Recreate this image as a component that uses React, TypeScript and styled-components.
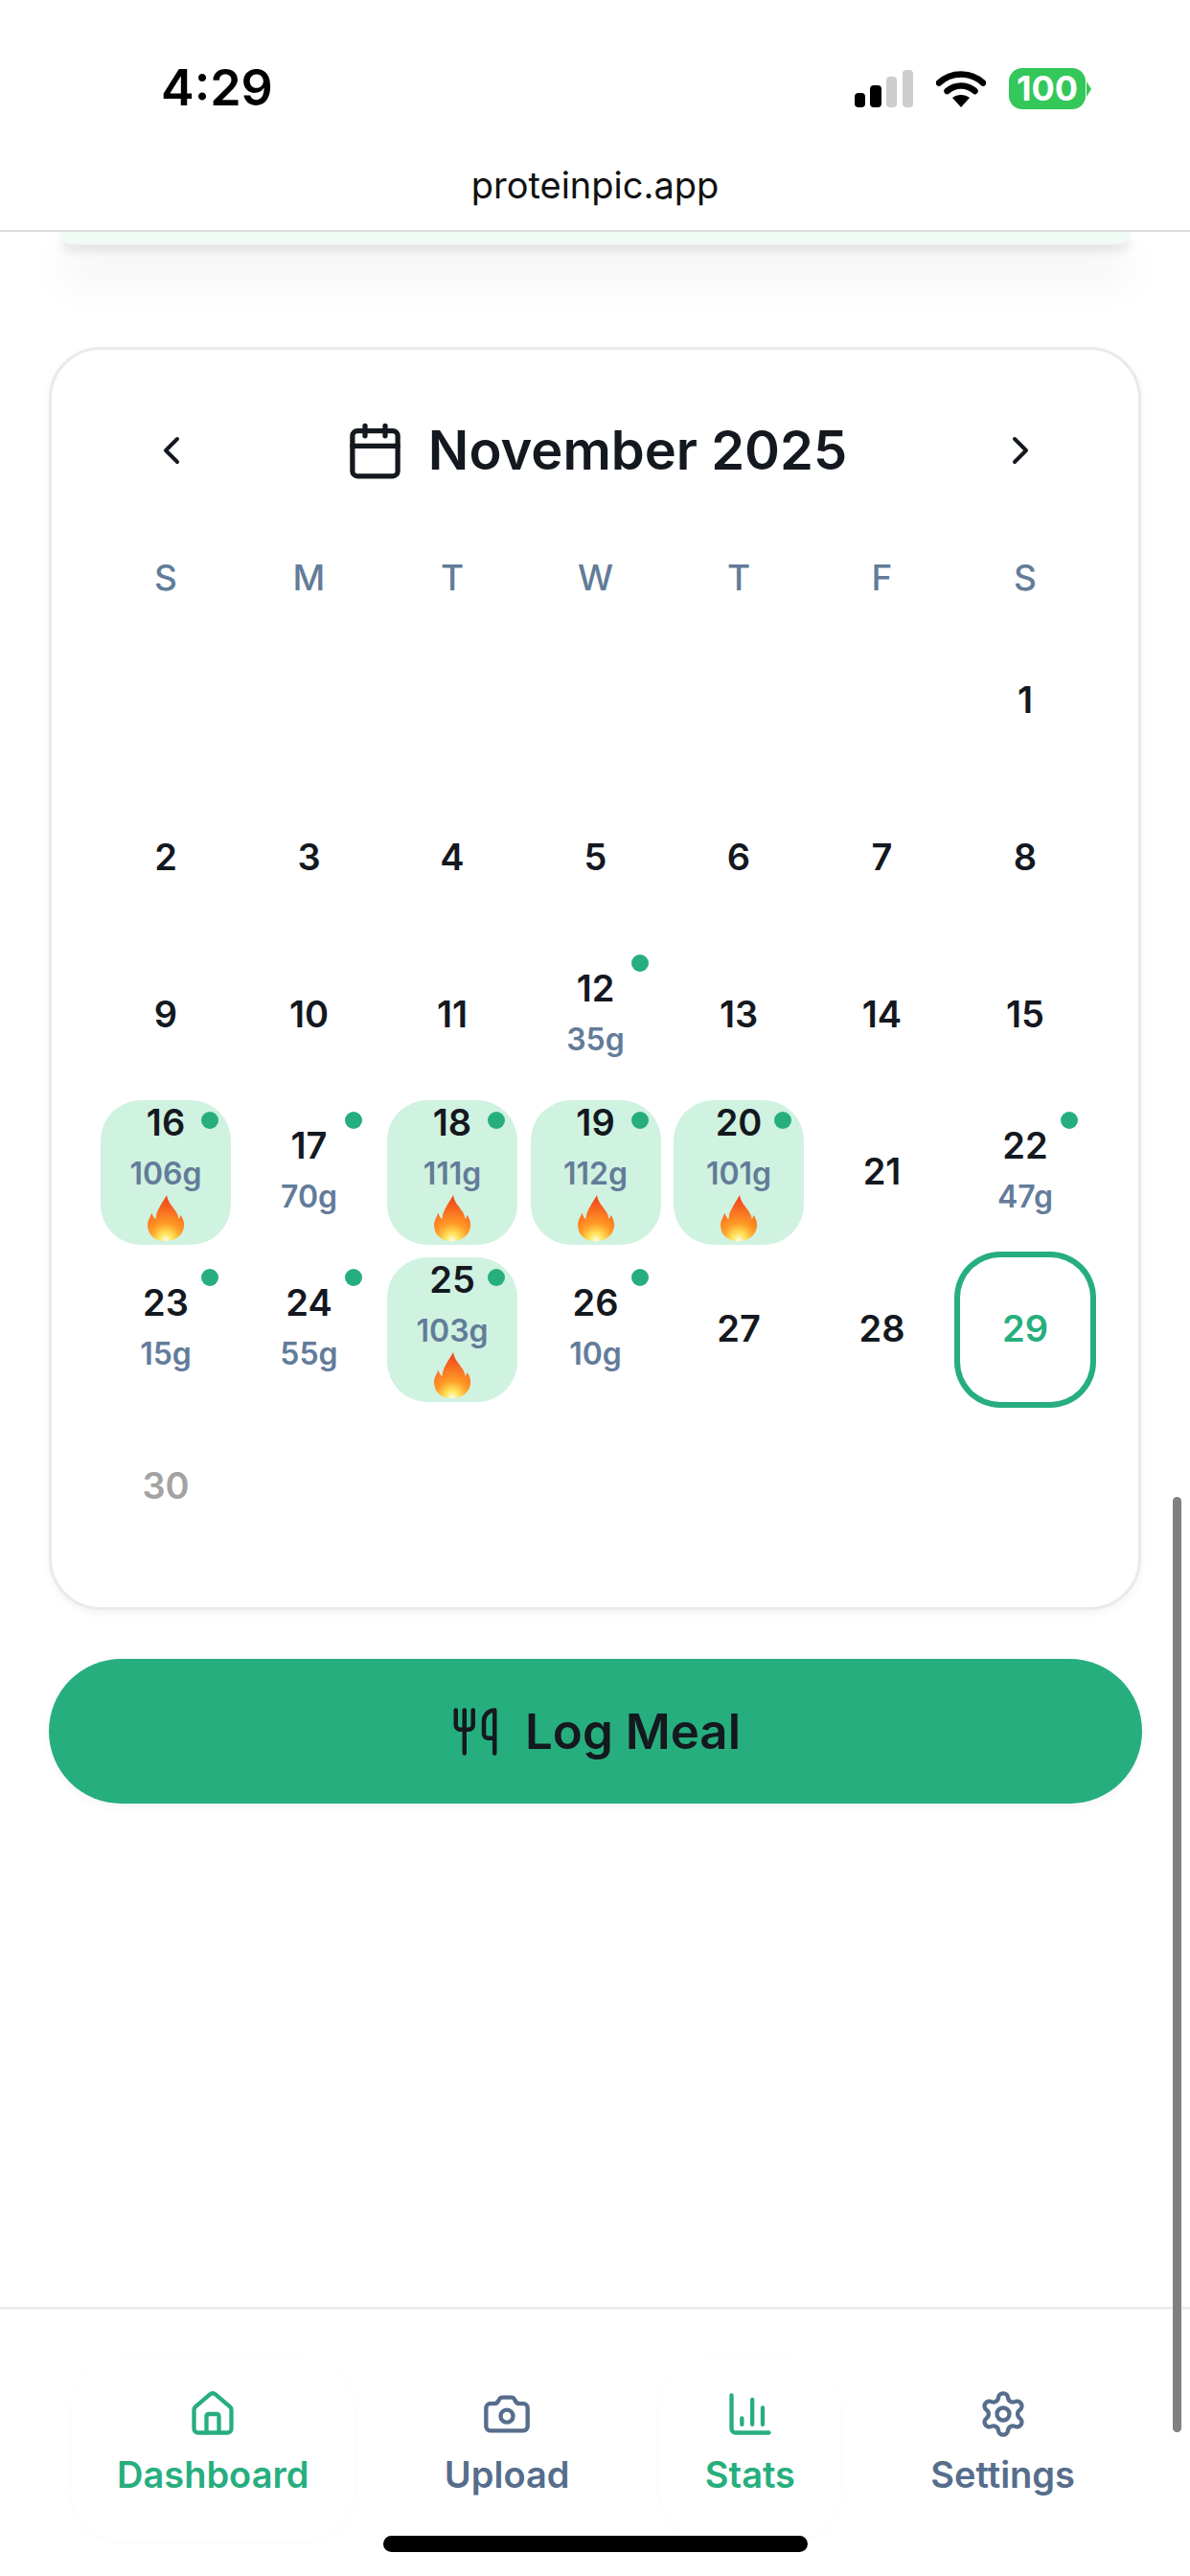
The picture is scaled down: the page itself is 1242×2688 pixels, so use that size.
import React from 'react'
import styled, { createGlobalStyle } from 'styled-components'
import { Calendar, Camera, ChartColumn, ChevronLeft, ChevronRight, House, Settings, Utensils } from 'lucide-react'

const GREEN = '#27ae7e'
const SLATE = '#627c99'
const INK = '#14181f'

const GlobalStyle = createGlobalStyle`
  html, body {
    margin: 0;
    padding: 0;
    background: #fff;
  }
  * {
    box-sizing: border-box;
  }
`

const Page = styled.div`
  position: relative;
  width: 1242px;
  height: 2688px;
  overflow: hidden;
  display: flex;
  flex-direction: column;
  background: #fff;
  font-family: Inter, 'Noto Sans', sans-serif;
  color: ${INK};
`

const TopBar = styled.header`
  position: relative;
  z-index: 2;
  height: 242px;
  flex-shrink: 0;
  background: #fff;
  border-bottom: 2px solid #dcdcdc;
`

const StatusRow = styled.div`
  display: flex;
  justify-content: space-between;
  align-items: center;
  height: 44px;
  margin-top: 70px;
  padding: 0 109px 0 168px;
`

const Time = styled.div`
  font-size: 52px;
  font-weight: 600;
  line-height: 44px;
  color: #000;
`

const StatusIcons = styled.div`
  display: flex;
  align-items: center;
  gap: 24px;
`

const Battery = styled.div`
  position: relative;
  width: 80px;
  height: 43px;
  border-radius: 14px;
  background: #34c759;
  color: #fff;
  font-size: 36px;
  font-weight: 700;
  line-height: 43px;
  text-align: center;
  &::after {
    content: '';
    position: absolute;
    left: 81px;
    top: 14px;
    border-left: 5px solid #34c759;
    border-top: 8px solid transparent;
    border-bottom: 8px solid transparent;
  }
`

const Url = styled.div`
  margin-top: 54px;
  font-size: 38px;
  line-height: 50px;
  text-align: center;
  color: #111;
`

const PrevCardEdge = styled.div`
  width: 1117px;
  height: 13px;
  margin: 0 auto;
  flex-shrink: 0;
  border-radius: 0 0 36px 36px;
  background: #f1fbf5;
  box-shadow: 0 8px 10px rgba(0, 0, 0, 0.09), 0 30px 44px 0 rgba(0, 0, 0, 0.12);
`

const CalendarCard = styled.section`
  width: 1140px;
  height: 1318px;
  margin: 107px auto 0;
  padding: 75px 48px 0 51px;
  flex-shrink: 0;
  border: 3px solid #e8eaed;
  border-radius: 54px;
  background: #fff;
  box-shadow: 0 3px 8px rgba(0, 0, 0, 0.05);
`

const CalendarHeader = styled.div`
  display: flex;
  justify-content: space-between;
  align-items: center;
  height: 60px;
  padding: 0 51px 0 50px;
  margin-bottom: 76px;
`

const NavButton = styled.button`
  display: flex;
  padding: 0;
  border: 0;
  background: none;
  color: ${INK};
`

const MonthTitle = styled.h2`
  display: flex;
  align-items: center;
  gap: 24px;
  margin: 0;
  font-size: 56px;
  font-weight: 600;
  line-height: 60px;
`

const Weekdays = styled.div`
  display: grid;
  grid-template-columns: repeat(7, 136px);
  column-gap: 13.5px;
  margin-bottom: 26px;
`

const Weekday = styled.div`
  font-size: 37px;
  font-weight: 500;
  line-height: 54px;
  text-align: center;
  color: ${SLATE};
`

const DayGrid = styled.div`
  display: grid;
  grid-template-columns: repeat(7, 136px);
  grid-auto-rows: 151px;
  gap: 13px 13.5px;
`

const DayCell = styled.div<{ $hit?: boolean; $today?: boolean; $logged?: boolean }>`
  position: relative;
  display: flex;
  flex-direction: column;
  align-items: center;
  justify-content: center;
  padding-bottom: ${(p) => (p.$logged ? '9px' : '4px')};
  border-radius: 42px;
  background: ${(p) => (p.$hit ? '#d0f2e0' : 'transparent')};
  box-shadow: ${(p) => (p.$today ? `0 0 0 6px ${GREEN}` : 'none')};
`

const DayNumber = styled.div<{ $today?: boolean; $muted?: boolean }>`
  font-size: 38px;
  font-weight: 600;
  line-height: 54px;
  color: ${(p) => (p.$today ? GREEN : p.$muted ? '#a3a3a3' : INK)};
`

const Grams = styled.div`
  margin-top: 4px;
  font-size: 32px;
  font-weight: 600;
  line-height: 45px;
  color: ${SLATE};
`

const LogDot = styled.span`
  position: absolute;
  top: 12px;
  right: 13px;
  width: 18px;
  height: 18px;
  border-radius: 50%;
  background: ${GREEN};
`

const FlameSlot = styled.div`
  display: flex;
  align-items: flex-end;
  justify-content: center;
  height: 50px;
`

const LogButton = styled.button`
  display: flex;
  align-items: center;
  justify-content: center;
  gap: 25px;
  width: 1141px;
  height: 151px;
  margin: 51px auto 0;
  flex-shrink: 0;
  border: 0;
  border-radius: 76px;
  background: ${GREEN};
  color: ${INK};
  font-family: inherit;
  font-size: 51px;
  font-weight: 600;
  box-shadow: 0 4px 10px rgba(0, 0, 0, 0.04);
`

const TabBar = styled.nav`
  display: flex;
  justify-content: space-between;
  align-items: flex-start;
  height: 281px;
  margin-top: auto;
  padding: 50px 72px 0 74px;
  border-top: 3px solid #ececec;
`

const Tab = styled.div<{ $active?: boolean }>`
  display: flex;
  flex-direction: column;
  align-items: center;
  gap: 10px;
  height: 192px;
  padding: 33px 48px 0;
  border-radius: 54px;
  color: ${(p) => (p.$active ? GREEN : '#566d8c')};
  box-shadow: ${(p) => (p.$active ? '0 2px 6px rgba(0, 0, 0, 0.018), 0 0 0 1px rgba(0, 0, 0, 0.008)' : 'none')};
`

const TabLabel = styled.span`
  font-size: 38px;
  font-weight: 600;
  line-height: 54px;
  white-space: nowrap;
`

const HomeIndicator = styled.div`
  position: absolute;
  left: 400px;
  top: 2646px;
  width: 443px;
  height: 17px;
  border-radius: 9px;
  background: #000;
`

const ScrollThumb = styled.div`
  position: absolute;
  left: 1224px;
  top: 1562px;
  width: 9px;
  height: 976px;
  border-radius: 5px;
  background: #808080;
`

type Day = { day: number; grams?: number; hit?: boolean; today?: boolean; muted?: boolean }

const logged: Record<number, number> = {
  12: 35, 16: 106, 17: 70, 18: 111, 19: 112, 20: 101, 22: 47, 23: 15, 24: 55, 25: 103, 26: 10,
}

const days: Day[] = Array.from({ length: 30 }, (_, i) => {
  const day = i + 1
  const grams = logged[day]
  return { day, grams, hit: grams >= 100, today: day === 29, muted: day === 30 }
})

const weekdays = ['S', 'M', 'T', 'W', 'T', 'F', 'S']

const tabs = [
  { label: 'Dashboard', icon: House, active: true },
  { label: 'Upload', icon: Camera },
  { label: 'Stats', icon: ChartColumn, active: true },
  { label: 'Settings', icon: Settings },
]

const SignalIcon = () => (
  <svg width="61" height="39" viewBox="0 0 61 39">
    <rect x="0" y="24" width="11" height="15" rx="4" fill="#000" />
    <rect x="16" y="16" width="12" height="23" rx="4" fill="#000" />
    <rect x="33" y="7" width="11" height="32" rx="4" fill="#cdcdcd" />
    <rect x="50" y="0" width="11" height="39" rx="4" fill="#cdcdcd" />
  </svg>
)

const WifiIcon = () => (
  <svg width="52" height="39" viewBox="0 0 52 39">
    <path d="M3 13.5C16 1.5 36 1.5 49 13.5" fill="none" stroke="#000" strokeWidth="6.5" strokeLinecap="round" />
    <path d="M11.5 22C20 14.5 32 14.5 40.5 22" fill="none" stroke="#000" strokeWidth="6.5" strokeLinecap="round" />
    <path d="M17 29C22 25 30 25 35 29L26 39Z" fill="#000" />
  </svg>
)

const Flame = () => (
  <svg width="40" height="48" viewBox="0 0 38 46">
    <defs>
      <radialGradient id="flame-fill" gradientUnits="userSpaceOnUse" cx="19" cy="45" r="42">
        <stop offset="0" stopColor="#fffde0" />
        <stop offset="0.16" stopColor="#ffe35a" />
        <stop offset="0.4" stopColor="#ff9a26" />
        <stop offset="1" stopColor="#f2441c" />
      </radialGradient>
    </defs>
    <path
      d="M20 0C21 8 27 12 30 18C31 20 32 22 32 24C33 23 34 21 34 20C37 25 38 29 37 33C35 41 28 46 19 46C9 46 2 41 1 32C0 27 3 23 5 18C6 21 7 23 9 24C9 16 15 9 20 0Z"
      fill="url(#flame-fill)"
    />
  </svg>
)

const App = () => (
  <Page>
    <GlobalStyle />
    <TopBar>
      <StatusRow>
        <Time>4:29</Time>
        <StatusIcons>
          <SignalIcon />
          <WifiIcon />
          <Battery>100</Battery>
        </StatusIcons>
      </StatusRow>
      <Url>proteinpic.app</Url>
    </TopBar>
    <PrevCardEdge />
    <CalendarCard>
      <CalendarHeader>
        <NavButton>
          <ChevronLeft size={48} />
        </NavButton>
        <MonthTitle>
          <Calendar size={63} />
          November 2025
        </MonthTitle>
        <NavButton>
          <ChevronRight size={48} />
        </NavButton>
      </CalendarHeader>
      <Weekdays>
        {weekdays.map((w, i) => (
          <Weekday key={i}>{w}</Weekday>
        ))}
      </Weekdays>
      <DayGrid>
        {Array.from({ length: 6 }, (_, i) => (
          <div key={i} />
        ))}
        {days.map((d) => (
          <DayCell key={d.day} $hit={d.hit} $today={d.today} $logged={!!d.grams}>
            {d.grams && <LogDot />}
            <DayNumber $today={d.today} $muted={d.muted}>
              {d.day}
            </DayNumber>
            {d.grams && <Grams>{d.grams}g</Grams>}
            {d.hit && (
              <FlameSlot>
                <Flame />
              </FlameSlot>
            )}
          </DayCell>
        ))}
      </DayGrid>
    </CalendarCard>
    <LogButton>
      <Utensils size={54} strokeWidth={2} />
      Log Meal
    </LogButton>
    <TabBar>
      {tabs.map((t) => (
        <Tab key={t.label} $active={t.active}>
          <t.icon size={52} />
          <TabLabel>{t.label}</TabLabel>
        </Tab>
      ))}
    </TabBar>
    <HomeIndicator />
    <ScrollThumb />
  </Page>
)

export default App
